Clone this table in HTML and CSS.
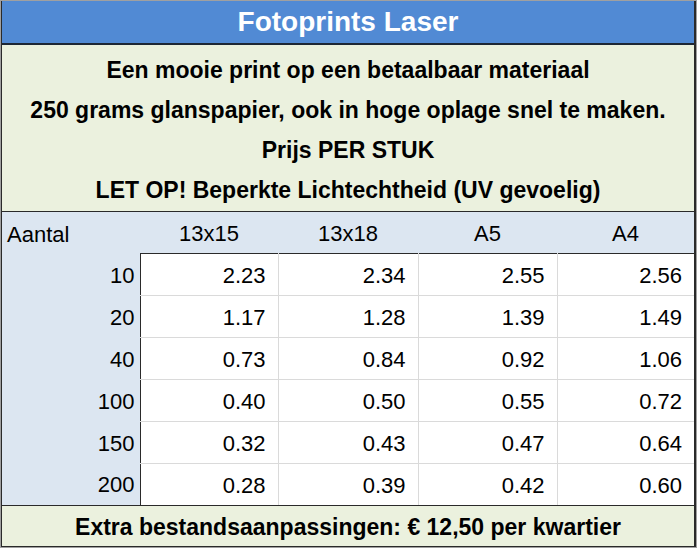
FILE: index.html
```html
<!DOCTYPE html>
<html lang="nl">
<head>
<meta charset="utf-8">
<title>Fotoprints Laser</title>
<link rel="stylesheet" href="styles.css">
</head>
<body>
<div class="frame">
  <div class="sheet">
    <div class="title">Fotoprints Laser</div>
    <div class="intro">
      <p>Een mooie print op een betaalbaar materiaal</p>
      <p>250 grams glanspapier, ook in hoge oplage snel te maken.</p>
      <p>Prijs PER STUK</p>
      <p>LET OP! Beperkte Lichtechtheid (UV gevoelig)</p>
    </div>
    <table class="prices">
      <colgroup>
        <col class="c0"><col class="c1"><col class="c2"><col class="c3"><col class="c4">
      </colgroup>
      <thead>
        <tr><th class="label">Aantal</th><th>13x15</th><th>13x18</th><th>A5</th><th>A4</th></tr>
      </thead>
      <tbody>
        <tr><th>10</th><td>2.23</td><td>2.34</td><td>2.55</td><td>2.56</td></tr>
        <tr><th>20</th><td>1.17</td><td>1.28</td><td>1.39</td><td>1.49</td></tr>
        <tr><th>40</th><td>0.73</td><td>0.84</td><td>0.92</td><td>1.06</td></tr>
        <tr><th>100</th><td>0.40</td><td>0.50</td><td>0.55</td><td>0.72</td></tr>
        <tr><th>150</th><td>0.32</td><td>0.43</td><td>0.47</td><td>0.64</td></tr>
        <tr><th>200</th><td>0.28</td><td>0.39</td><td>0.42</td><td>0.60</td></tr>
      </tbody>
    </table>
    <div class="footer">Extra bestandsaanpassingen: € 12,50 per kwartier</div>
  </div>
</div>
</body>
</html>
```

FILE: styles.css
```css
* { box-sizing: border-box; }
html, body { margin: 0; padding: 0; background: #ffffff; }
body { font-family: "Liberation Sans", Arial, sans-serif; color: #000; }

.frame {
  width: 697px;
  height: 548px;
  border: 1px solid #a0a0a0;
}
.sheet {
  height: 546px;
  border-left: 1px solid #2a2a2a;
  border-right: 2px solid #2a2a2a;
  border-bottom: 1px solid #2a2a2a;
  background: #ebf1de;
  display: flex;
  flex-direction: column;
}
.title {
  height: 44px;
  background: #518ad4;
  border-bottom: 2px solid #1d2735;
  color: #fff;
  font-weight: bold;
  font-size: 28px;
  line-height: 42px;
  text-align: center;
}
.intro {
  padding: 5px 0 1px;
  border-bottom: 1px solid #2a2a2a;
  text-align: center;
  font-weight: bold;
  font-size: 23px;
}
.intro p { margin: 0; height: 40px; line-height: 40px; }

.prices {
  width: 692px;
  border-collapse: collapse;
  table-layout: fixed;
  font-size: 22px;
}
.c0 { width: 138px; }
.c1 { width: 138px; }
.c2 { width: 140px; }
.c3 { width: 139px; }
.c4 { width: 137px; }
.prices thead th {
  height: 41px;
  background: #dce6f1;
  font-weight: normal;
  text-align: center;
  padding: 4px 0 0;
}
.prices thead th.label { text-align: left; padding-left: 5px; }
.prices tbody th {
  height: 42px;
  background: #dce6f1;
  font-weight: normal;
  text-align: right;
  padding: 3px 5px 0 0;
}
.prices td {
  height: 42px;
  background: #fff;
  text-align: right;
  padding: 3px 12px 0 0;
  border: 1px solid #dadada;
}
.prices tbody tr:first-child td { border-top: 1px solid #2a2a2a; }
.prices tbody tr:last-child td { border-bottom: 1px solid #2a2a2a; }
.prices tbody td:nth-child(2) { border-left: 1px solid #2a2a2a; }
.prices tbody td:last-child { border-right: none; }
.prices tbody tr:last-child th { border-bottom: 1px solid #2a2a2a; }

.footer {
  flex: 1;
  text-align: center;
  font-weight: bold;
  font-size: 23px;
  line-height: 42px;
}
```
